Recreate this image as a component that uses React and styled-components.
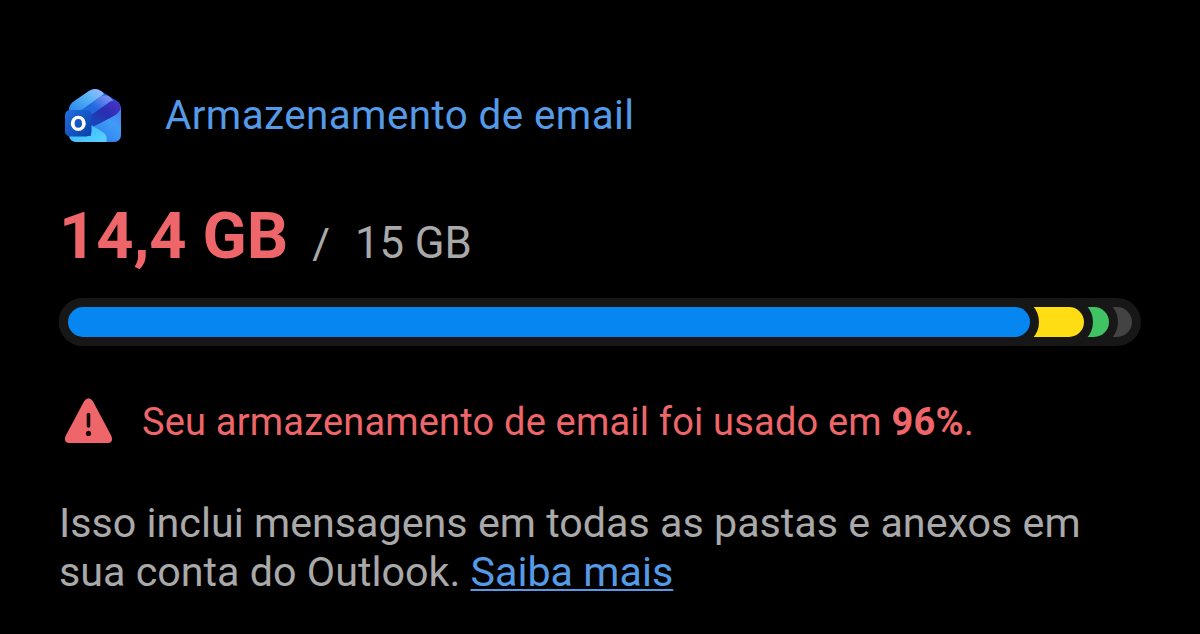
import React from "react";
import styled, { createGlobalStyle } from "styled-components";

const GlobalStyle = createGlobalStyle`
  body { margin: 0; background: #000; }
`;

const Card = styled.main`
  box-sizing: border-box;
  width: 1200px;
  height: 634px;
  padding: 87px 60px 0;
  overflow: hidden;
  background: #000;
  color: #a9a9a9;
  font-family: Roboto, sans-serif;
`;

const Header = styled.header`
  display: flex;
  align-items: center;
  gap: 43px;
  height: 57px;
  padding-left: 4px;
`;

const Title = styled.h1`
  margin: 0;
  color: #559ae6;
  font-size: 40.4px;
  font-weight: 400;
  line-height: 56px;
  letter-spacing: 0.41px;
  white-space: nowrap;
`;

const Usage = styled.div`
  display: flex;
  align-items: baseline;
  height: 80px;
  margin: 52px 0 0 -1px;
  line-height: 80px;
  white-space: nowrap;
`;

const Used = styled.strong`
  color: #ee6669;
  font-size: 65px;
  font-weight: 700;
  letter-spacing: -0.1px;
`;

const Slash = styled.span`
  margin-left: 24px;
  font-size: 43px;
`;

const Total = styled.span`
  margin-left: 25px;
  font-size: 43.7px;
`;

const Meter = styled.div`
  display: grid;
  height: 30px;
  margin: 31px 8px 0;
`;

const Segment = styled.div`
  grid-area: 1 / 1;
  width: ${(p) => p.$end}px;
  border-radius: 15px;
  background: ${(p) => p.$color};
  box-shadow: 0 0 0 9px #171717;
`;

const Warning = styled.div`
  display: flex;
  align-items: center;
  gap: 29px;
  height: 56px;
  margin-top: 56px;
  padding-left: 4px;
  color: #ee6669;
  font-size: 38px;
  letter-spacing: 0.19px;
  white-space: nowrap;
`;

const WarningText = styled.span`
  padding-top: 2px;
  line-height: 56px;
`;

const Description = styled.p`
  margin: 50px 0 0 -1px;
  font-size: 41.25px;
  line-height: 48.6px;
  white-space: nowrap;
`;

const Link = styled.a`
  color: #559ae6;
  text-decoration: underline;
  text-decoration-thickness: 2px;
  text-underline-offset: 3px;
  text-decoration-skip-ink: none;
`;

const segments = [
  { color: "#434343", end: 1064 },
  { color: "#40c463", end: 1041 },
  { color: "#ffdd15", end: 1016 },
  { color: "#0586f0", end: 962 },
];

function OutlookIcon() {
  return (
    <svg width="58" height="56" viewBox="0 0 58 56" aria-hidden="true">
      <defs>
        <linearGradient id="top" x1="0" y1="1" x2="1" y2="0">
          <stop offset="0" stopColor="#1a78e4" />
          <stop offset="0.6" stopColor="#55b4f6" />
          <stop offset="1" stopColor="#a7bdff" />
        </linearGradient>
        <linearGradient id="mid" x1="0" y1="1" x2="1" y2="0">
          <stop offset="0" stopColor="#1764d8" />
          <stop offset="0.55" stopColor="#2468e0" />
          <stop offset="1" stopColor="#8f9bf8" />
        </linearGradient>
        <linearGradient id="low" x1="0" y1="1" x2="1" y2="0">
          <stop offset="0" stopColor="#1451c4" />
          <stop offset="0.55" stopColor="#2630b0" />
          <stop offset="1" stopColor="#5433cc" />
        </linearGradient>
        <linearGradient id="right" x1="1" y1="0" x2="0.3" y2="1">
          <stop offset="0" stopColor="#4a74f0" />
          <stop offset="0.45" stopColor="#3f9cf6" />
          <stop offset="1" stopColor="#2f80ee" />
        </linearGradient>
        <linearGradient id="flap" x1="0" y1="0" x2="1" y2="1">
          <stop offset="0" stopColor="#35b4fb" />
          <stop offset="1" stopColor="#5cd4fd" />
        </linearGradient>
        <linearGradient id="badge" x1="0" y1="0" x2="1" y2="1">
          <stop offset="0" stopColor="#1f70df" />
          <stop offset="1" stopColor="#0a3ea8" />
        </linearGradient>
        <clipPath id="shell">
          <path d="M5 22Q5 17 9 14L25 3Q31-1 37 3L53 13Q57 16 57 21V46Q57 54 49 54H13Q5 54 5 46Z" />
        </clipPath>
      </defs>
      <g clipPath="url(#shell)">
        <rect width="58" height="56" fill="#1658cf" />
        <path d="M3 25L4 16L27 0H35L40 6L10 28Z" fill="url(#top)" />
        <path d="M9 28L37 8Q45 5 49 13L23 34Z" fill="url(#mid)" />
        <path d="M20 32L47 13Q54 12 58 20L56 23Q54 26 50 28L30 40Z" fill="url(#low)" />
        <path d="M57 19Q56 25 48 29L27 40L32 55H58Z" fill="url(#right)" />
        <path d="M27 37L37 43Q46 48 41 56H5V48H27Z" fill="url(#flap)" />
      </g>
      <rect x="1" y="22" width="26.5" height="26.5" rx="5" fill="url(#badge)" />
      <path
        fill="#fff"
        fillRule="evenodd"
        d="M14.3 27.8A7.5 7.6 0 0 1 14.3 43A7.5 7.6 0 0 1 14.3 27.8ZM14.3 31A3.7 4.4 0 0 0 14.3 39.8A3.7 4.4 0 0 0 14.3 31Z"
      />
    </svg>
  );
}

function AlertIcon() {
  return (
    <svg width="49" height="46" viewBox="0 0 49 46" aria-hidden="true">
      <path
        d="M20.2 3.1Q24.5-2.4 28.8 3.1L47.4 38Q49.8 45 43.5 45H5.5Q-.8 45 1.6 38Z"
        fill="#ee6669"
      />
      <path d="M24.5 16.5V28" stroke="#140808" strokeWidth="3.6" strokeLinecap="round" />
      <circle cx="24.5" cy="35.4" r="2.6" fill="#140808" />
    </svg>
  );
}

export default function App() {
  return (
    <>
      <GlobalStyle />
      <Card>
        <Header>
          <OutlookIcon />
          <Title>Armazenamento de email</Title>
        </Header>
        <Usage>
          <Used>14,4 GB</Used>
          <Slash>/</Slash>
          <Total>15 GB</Total>
        </Usage>
        <Meter>
          {segments.map((s) => (
            <Segment key={s.color} $color={s.color} $end={s.end} />
          ))}
        </Meter>
        <Warning>
          <AlertIcon />
          <WarningText>
            Seu armazenamento de email foi usado em <b>96%</b>.
          </WarningText>
        </Warning>
        <Description>
          Isso inclui mensagens em todas as pastas e anexos em
          <br />
          sua conta do Outlook. <Link>Saiba mais</Link>
        </Description>
      </Card>
    </>
  );
}
